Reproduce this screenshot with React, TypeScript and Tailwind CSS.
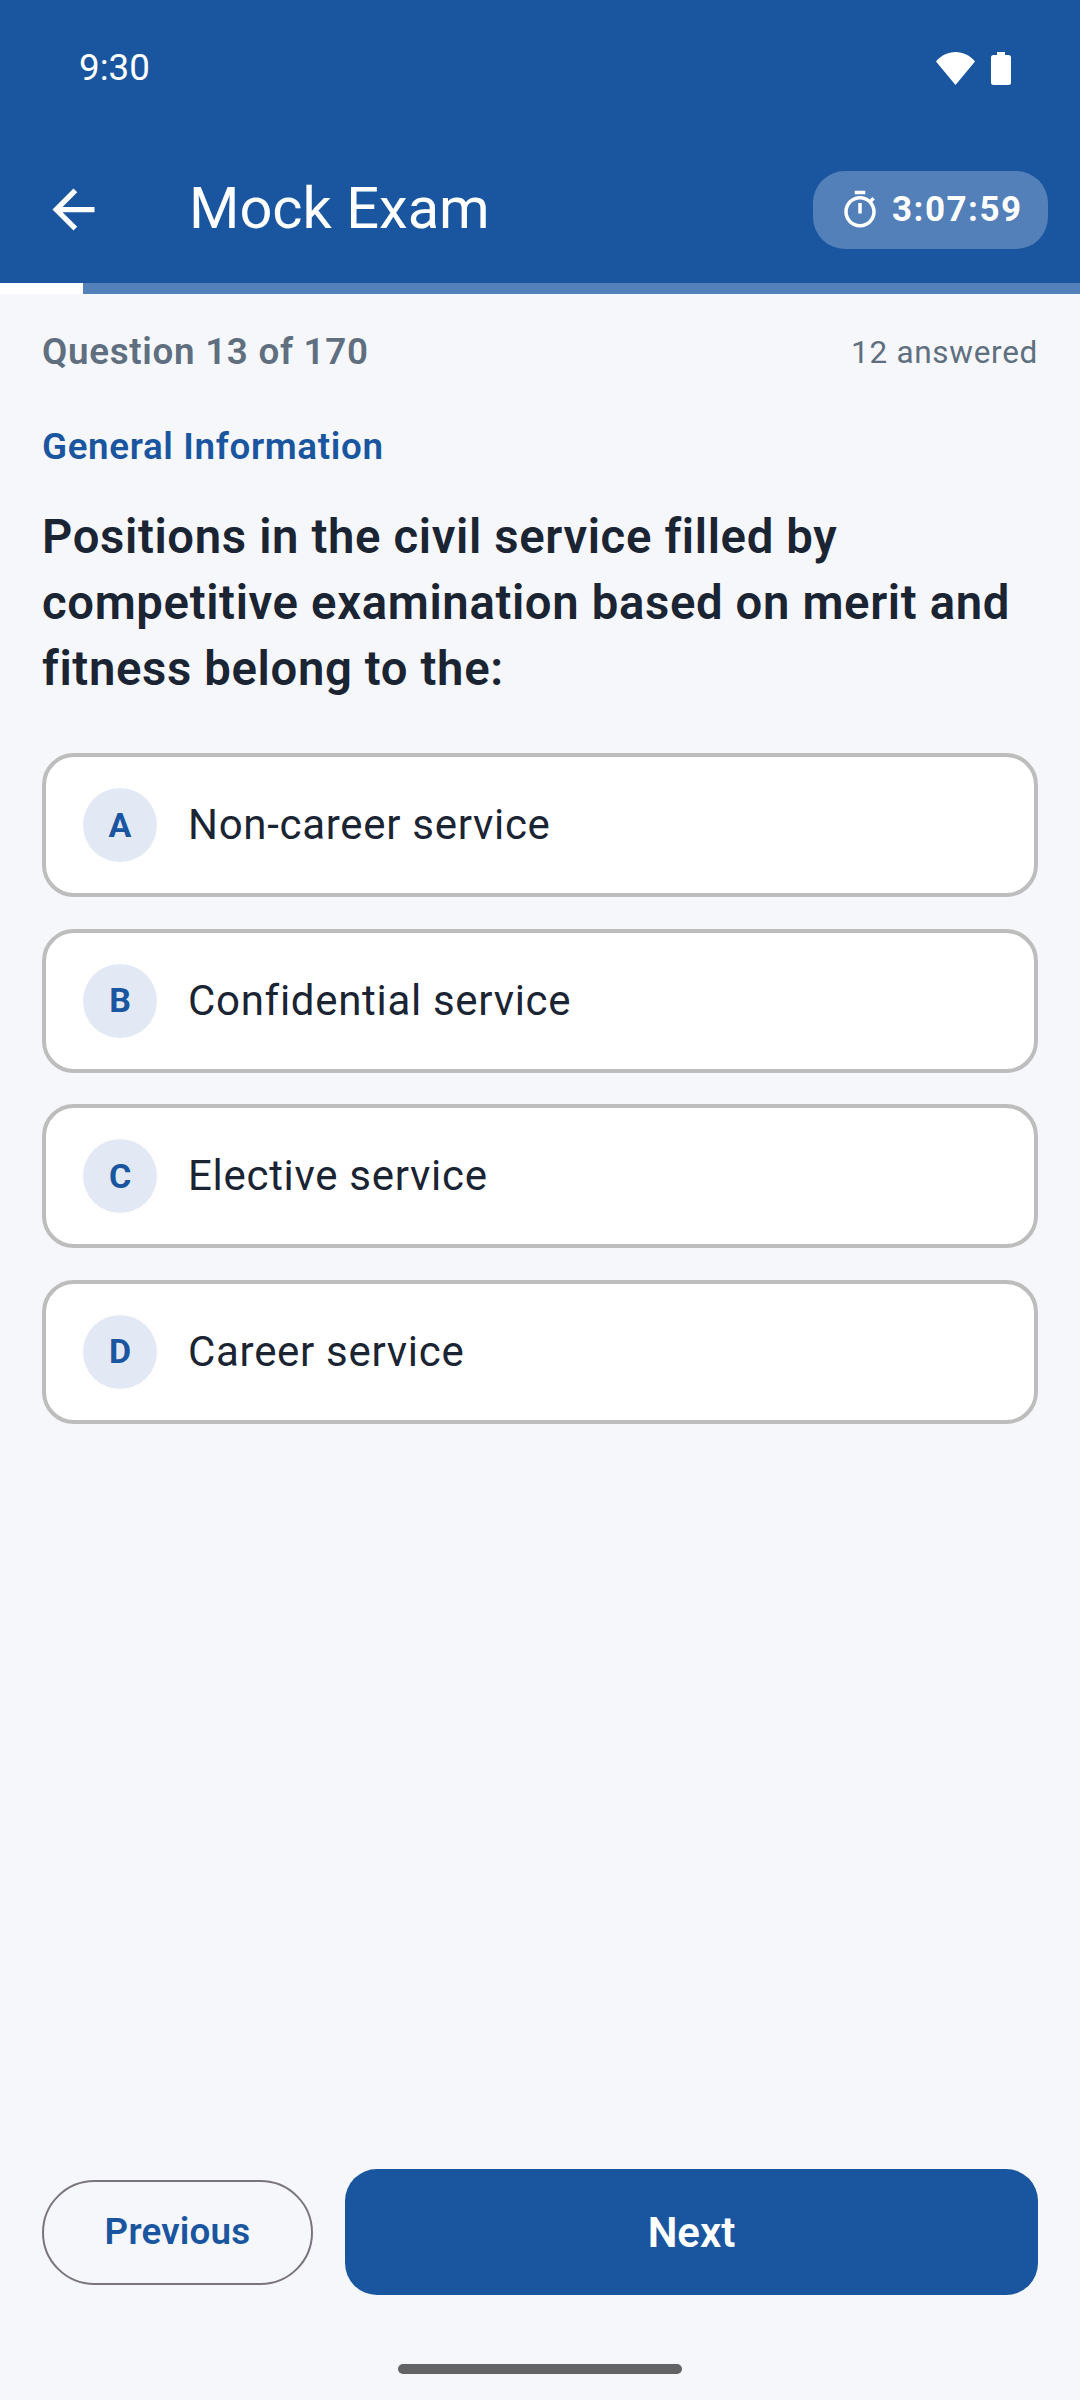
const options = [
  { key: "A", label: "Non-career service" },
  { key: "B", label: "Confidential service" },
  { key: "C", label: "Elective service" },
  { key: "D", label: "Career service" },
];

function StatusBar() {
  return (
    <div className="h-[136px] flex items-center justify-between pl-[79px] pr-[69px]">
      <span className="text-[36.75px] leading-[44px] text-white">9:30</span>
      <div className="flex items-center gap-[16px]">
        <svg width="39" height="33" viewBox="0 0 39 33" fill="white">
          <path d="M19.5 33 0 9.500C5 3.500 12 0 19.5 0S34 3.500 39 9.500L19.5 33z" />
        </svg>
        <svg width="20" height="33" viewBox="0 0 20 33" fill="white">
          <path d="M6 0h8v3h3.500A2.500 2.500 0 0 1 20 5.500V30.500A2.500 2.500 0 0 1 17.500 33H2.500A2.500 2.500 0 0 1 0 30.500V5.500A2.500 2.500 0 0 1 2.500 3H6V0z" />
        </svg>
      </div>
    </div>
  );
}

function AppBar() {
  return (
    <div className="h-[147px] flex items-center pl-[42px] pr-[32px]">
      <svg width="63" height="63" viewBox="0 0 24 24" fill="white">
        <path d="M20 11H7.83l5.59-5.59L12 4l-8 8 8 8 1.41-1.41L7.83 13H20v-2z" />
      </svg>
      <h1 className="ml-[84px] mb-[3px] flex-1 text-[57.75px] leading-[74px] font-normal text-white">Mock Exam</h1>
      <div className="h-[78px] w-[235px] rounded-[32px] bg-[#5380b8] flex items-center pl-[26px]">
        <svg width="42" height="42" viewBox="0 0 24 24" fill="white">
          <path d="M15 1H9v2h6V1zm-4 13h2V8h-2v6zm8.030-6.610l1.420-1.420c-.430-.510-.900-.990-1.410-1.410l-1.420 1.420C16.070 4.740 14.120 4 12 4c-4.970 0-9 4.030-9 9s4.020 9 9 9 9-4.030 9-9c0-2.120-.740-4.070-1.970-5.610zM12 20c-3.870 0-7-3.130-7-7s3.130-7 7-7 7 3.130 7 7-3.130 7-7 7z" />
        </svg>
        <span className="ml-[11px] text-[35px] leading-[44px] font-bold tracking-[1.5px] text-white">3:07:59</span>
      </div>
    </div>
  );
}

function OptionCard({ letter, label }: { letter: string; label: string }) {
  return (
    <div className="h-[144px] rounded-[32px] border-4 border-[#bdbdbd] bg-white flex items-center pl-[37px]">
      <div className="w-[74px] h-[74px] rounded-full bg-[#e3e9f4] flex items-center justify-center text-[34px] font-bold text-[#1a56a0]">
        {letter}
      </div>
      <span className="ml-[31px] text-[42px] leading-[56px] tracking-[0.7px] text-[#1a2433]">{label}</span>
    </div>
  );
}

export default function App() {
  return (
    <div className="h-[2400px] w-[1080px] flex flex-col bg-[#f6f7fb] font-['Roboto',sans-serif]">
      <div className="bg-[#1a56a0]">
        <StatusBar />
        <AppBar />
      </div>
      <div className="h-[11px] bg-[#5380b8]">
        <div className="h-full w-[83px] bg-white" />
      </div>
      <div className="flex-1 px-[42px] pt-[36px]">
        <div className="flex items-center justify-between h-[44px]">
          <span className="text-[36.75px] font-semibold tracking-[0.7px] text-[#5f6f80]">Question 13 of 170</span>
          <span className="pt-[1px] text-[31.5px] tracking-[0.7px] text-[#5f6f80]">12 answered</span>
        </div>
        <div className="mt-[51px] h-[44px] flex items-center text-[36.75px] font-semibold tracking-[0.65px] text-[#1a56a0]">General Information</div>
        <p className="mt-[35px] text-[47.25px] leading-[66px] font-semibold tracking-[0.65px] text-[#1a2433]">
          Positions in the civil service filled by competitive examination based on merit and fitness belong to the:
        </p>
        <div className="mt-[51px] flex flex-col gap-[31.5px]">
          {options.map((o) => (
            <OptionCard key={o.key} letter={o.key} label={o.label} />
          ))}
        </div>
      </div>
      <div className="px-[42px] flex items-center gap-[32px]">
        <button className="w-[271px] h-[105px] rounded-full border-2 border-[#79747e] text-[36.75px] font-semibold tracking-[0.2px] text-[#1a56a0]">
          Previous
        </button>
        <button className="flex-1 h-[126px] rounded-[32px] bg-[#1a56a0] text-[42px] font-semibold text-white">Next</button>
      </div>
      <div className="h-[105px] flex justify-center pt-[69px]">
        <div className="w-[284px] h-[10px] rounded-full bg-[#636366]" />
      </div>
    </div>
  );
}
